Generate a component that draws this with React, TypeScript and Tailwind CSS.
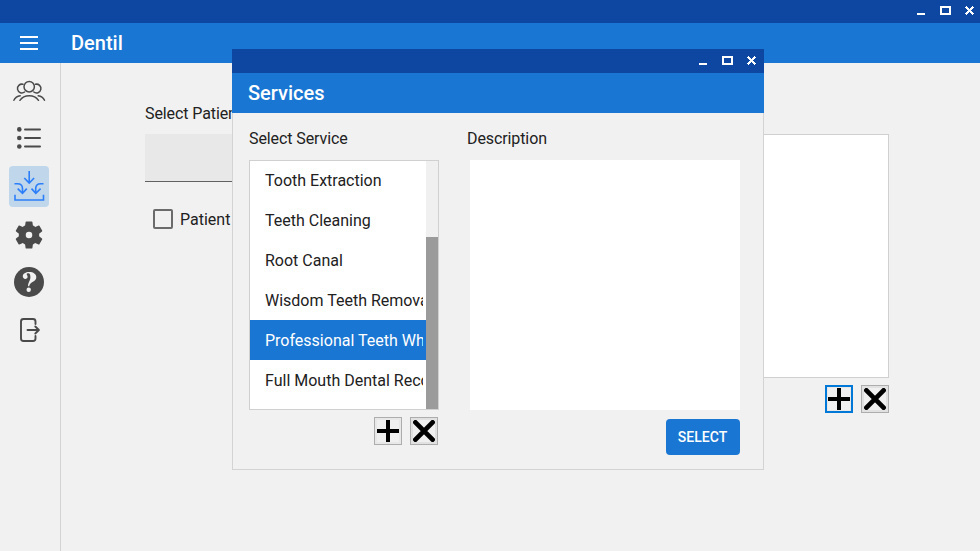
import type { ReactNode } from "react";

function WindowControls({ className }: { className: string }) {
  return (
    <div className={`flex items-end bg-[#0d47a1] justify-end ${className}`}>
      <div className="mr-[15px] h-[2px] w-2 bg-white" />
      <div className="mr-[14px] h-[9px] w-[11px] border-2 border-white" />
      <svg className="size-[9px]" viewBox="0 0 9 9" fill="#fff" shapeRendering="crispEdges">
        <path d="M1 0h1v1h1v1h1v1h1v-1h1v-1h1v-1h1v1h1v1h-1v1h-1v1h-1v1h1v1h1v1h1v1h-1v1h-1v-1h-1v-1h-1v-1h-1v1h-1v1h-1v1h-1v-1h-1v-1h1v-1h1v-1h1v-1h-1v-1h-1v-1h-1v-1h1z" />
      </svg>
    </div>
  );
}

function PeopleIcon() {
  return (
    <svg className="h-[23px] w-[34px]" viewBox="0 0 34 23" fill="none" stroke="#4a4a4a" strokeWidth="1.5" strokeLinecap="round">
      <circle cx="17.2" cy="7.7" r="5.2" />
      <path d="M11 5.3A4.4 4.4 0 1 0 12.6 13M23.4 5.3A4.4 4.4 0 1 1 21.8 13" />
      <path d="M7.9 21.3C10 18.2 13.3 16.7 17.2 16.7s7.2 1.5 9.3 4.6M1.9 21.3c1.2-2.5 3.2-4.1 6.3-4.5M32.5 21.3c-1.2-2.5-3.2-4.1-6.3-4.5" />
    </svg>
  );
}

function ListIcon() {
  return (
    <svg className="h-[25px] w-[26px]" viewBox="0 0 26 25" fill="#4a4a4a">
      <circle cx="3.3" cy="3.4" r="2.3" />
      <circle cx="3.3" cy="12" r="2.3" />
      <circle cx="3.3" cy="20.5" r="2.3" />
      <path d="M9 3.4h15M9 12h15M9 20.5h15" stroke="#4a4a4a" strokeWidth="2" strokeLinecap="round" />
    </svg>
  );
}

function InboxIcon() {
  return (
    <svg className="h-[33px] w-[32px]" viewBox="0 0 32 33" fill="none" stroke="#2d7ff9" strokeWidth="1.6">
      <path d="M16.200 1v11.800M11.300 8l4.900 5.100L21.100 8" />
      <path d="M1.500 13.800h3c3.300 0 5 1.700 5 5V23M4.700 18.600l4.800 4.800 4.300-4.800" />
      <path d="M30.500 13.800h-2.800c-3.300 0-5 1.700-5 5V23M18.500 18.600l4.300 4.800 4.800-4.800" />
      <path d="M2 24.800v5.200h28.500v-5.200" />
    </svg>
  );
}

function GearIcon() {
  return (
    <svg className="size-[34px]" viewBox="0 0 24 24">
      <path fill="#4a4a4a" d="M19.14 12.94c.04-.3.06-.61.06-.94 0-.32-.02-.64-.07-.94l2.03-1.58a.49.49 0 0 0 .12-.61l-1.92-3.32a.49.49 0 0 0-.59-.22l-2.39.96c-.5-.38-1.03-.7-1.62-.94l-.36-2.54a.48.48 0 0 0-.48-.41h-3.84a.47.47 0 0 0-.47.41l-.36 2.54c-.59.24-1.13.57-1.62.94l-2.39-.96a.48.48 0 0 0-.59.22L2.74 8.87a.47.47 0 0 0 .12.61l2.03 1.58c-.05.3-.09.63-.09.94s.02.64.07.94l-2.03 1.58a.49.49 0 0 0-.12.61l1.92 3.32c.12.22.37.29.59.22l2.39-.96c.5.38 1.03.7 1.62.94l.36 2.54c.05.24.24.41.48.41h3.84c.24 0 .44-.17.47-.41l.36-2.54c.59-.24 1.13-.56 1.62-.94l2.39.96c.22.08.47 0 .59-.22l1.92-3.32a.47.47 0 0 0-.12-.61z" />
      <circle cx="12" cy="12" r="2.3" fill="#f1f1f1" />
    </svg>
  );
}

function HelpIcon() {
  return (
    <svg className="mb-px size-[30px]" viewBox="0 0 30 30">
      <circle cx="15" cy="15" r="15" fill="#4a4a4a" />
      <path
        fill="#f1f1f1"
        d="M14.100 19.200c-.4-3.400 2.300-5.300 2.300-9 0-2.500-.6-3.900-2-3.900-1 0-1.700.4-1.700 1 0 .7.900 1.100.9 2.400 0 1.400-1 2.200-2.300 2.200-1.500 0-2.500-1.100-2.500-2.600C8.800 6.700 11.600 5 15.300 5c4.100 0 7 2 7 5.300 0 4.700-6.500 4.300-7.100 8.900z"
      />
      <circle cx="14.700" cy="22.800" r="2.200" fill="#f1f1f1" />
    </svg>
  );
}

function LogoutIcon() {
  return (
    <svg className="mb-0.5 ml-0.5 h-[26px] w-[22px]" viewBox="0 0 22 26" fill="none" stroke="#4a4a4a" strokeWidth="1.9" strokeLinecap="round" strokeLinejoin="round">
      <path d="M16.500 7V4.500a2.500 2.500 0 0 0-2.500-2.500H4.500a2.500 2.500 0 0 0-2.500 2.500v17A2.500 2.500 0 0 0 4.500 24H14a2.500 2.500 0 0 0 2.500-2.500V19M8.500 13h11.200M16.300 9.500l3.600 3.500-3.600 3.500" />
    </svg>
  );
}

function NavItem({ children, active = false }: { children: ReactNode; active?: boolean }) {
  return (
    <div className={`flex h-[41px] w-10 shrink-0 items-center justify-center rounded ${active ? "bg-[#bfd6eb]" : ""}`}>
      {children}
    </div>
  );
}

function AddRemove({ focused = false }: { focused?: boolean }) {
  return (
    <div className="flex justify-end gap-2">
      <button className={`flex size-7 items-center justify-center bg-[#e8e8e8] ${focused ? "border-2 border-[#0078d7]" : "border border-[#adadad]"}`}>
        <svg className="size-[22px] shrink-0 bg-[#f0f0f0]" viewBox="0 0 22 22" stroke="#000" strokeWidth="4" strokeLinecap="butt">
          <path d="M11 0v22M0 11h22" />
        </svg>
      </button>
      <button className="flex size-7 items-center justify-center border border-[#adadad] bg-[#e1e1e1]">
        <svg className="size-[22px] shrink-0 bg-[#f0f0f0]" viewBox="0 0 22 22" stroke="#000" strokeWidth="4.800" strokeLinecap="round">
          <path d="M2.400 2.400l17.200 17.200M19.600 2.400L2.400 19.600" />
        </svg>
      </button>
    </div>
  );
}

const services = [
  "Tooth Extraction",
  "Teeth Cleaning",
  "Root Canal",
  "Wisdom Teeth Removal",
  "Professional Teeth Whitening",
  "Full Mouth Dental Reconstruction",
];

function ServicesDialog() {
  return (
    <div className="absolute top-[49px] left-[232px] flex h-[421px] w-[532px] flex-col bg-[#f1f1f1]">
      <WindowControls className="h-6 shrink-0 pr-2 pb-2" />
      <div className="flex h-10 shrink-0 items-center bg-[#1976d2] pl-4 text-[20px] font-medium text-white">Services</div>
      <div className="flex flex-1 border border-t-0 border-[#d3d3d3] pl-4">
        <div className="w-[190px]">
          <div className="pt-[14px] leading-6 tracking-[-0.1px]">Select Service</div>
          <div className="mt-[9px] flex h-[250px] border border-[#d0d0d0] bg-white">
            <div className="-mt-px w-44">
              {services.map((name) => (
                <div key={name} className={`h-10 pr-[3px] pl-[15px] leading-[42px] ${name.startsWith("Professional") ? "bg-[#1976d2] text-white" : ""}`}>
                  <div className="h-10 overflow-hidden whitespace-nowrap">{name}</div>
                </div>
              ))}
            </div>
            <div className="flex w-3 flex-col justify-end bg-[#f0f0f0]">
              <div className="h-[172px] bg-[#9b9b9b]" />
            </div>
          </div>
          <div className="mt-[7px] pr-px">
            <AddRemove />
          </div>
        </div>
        <div className="ml-7 w-[273px]">
          <div className="pt-[14px] leading-6 tracking-[-0.1px]">Description</div>
          <div className="mt-[9px] ml-[3px] h-[250px] bg-white" />
          <div className="mt-[9px] flex justify-end">
            <button className="h-9 w-[74px] rounded bg-[#1976d2] pr-px text-sm font-medium text-white">SELECT</button>
          </div>
        </div>
      </div>
    </div>
  );
}

export default function App() {
  return (
    <div className="relative flex h-[551px] w-[980px] flex-col overflow-hidden bg-[#f1f1f1] font-[Roboto,sans-serif] text-base text-[#212121]">
      <WindowControls className="h-[23px] shrink-0 pr-1.5 pb-2" />
      <header className="flex h-10 shrink-0 items-center bg-[#1976d2] pl-5">
        <div className="flex w-[18px] flex-col gap-1">
          <div className="h-[2px] bg-white" />
          <div className="h-[2px] bg-white" />
          <div className="h-[2px] bg-white" />
        </div>
        <div className="ml-[33px] text-[20px] font-medium text-white">Dentil</div>
      </header>
      <div className="flex flex-1">
        <nav className="flex w-[61px] flex-col gap-[7px] border-r border-[#d3d3d3] pt-[7px] pl-[9px]">
          <NavItem><PeopleIcon /></NavItem>
          <NavItem><ListIcon /></NavItem>
          <NavItem active><InboxIcon /></NavItem>
          <NavItem><GearIcon /></NavItem>
          <NavItem><HelpIcon /></NavItem>
          <NavItem><LogoutIcon /></NavItem>
        </nav>
        <main className="flex flex-1 justify-between pr-[91px] pl-[84px]">
          <div className="w-[250px] pt-[39px]">
            <div className="leading-6 tracking-[-0.1px]">Select Patient</div>
            <div className="mt-2 h-12 border-b border-[#616161] bg-[#e8e8e8]" />
            <div className="mt-[25px] flex items-center pl-2">
              <div className="size-5 rounded-[2px] border-2 border-[#6b6b6b]" />
              <div className="ml-[7px] pt-0.5 leading-[22px]">Patient</div>
            </div>
          </div>
          <div className="w-[300px] pt-[71px]">
            <div className="mb-[7px] h-[244px] border border-[#d0d0d0] bg-white" />
            <AddRemove focused />
          </div>
        </main>
      </div>
      <ServicesDialog />
    </div>
  );
}
